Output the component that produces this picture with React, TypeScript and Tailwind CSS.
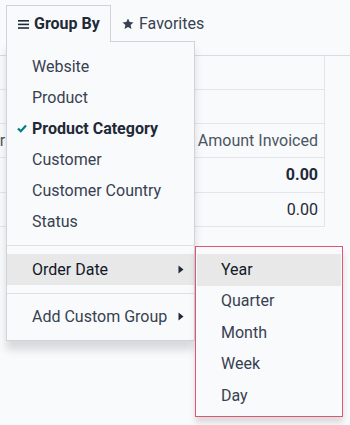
import React from "react";

const Caret = () => (
  <svg width="6" height="9" viewBox="0 0 6 9" className="shrink-0">
    <path d="M0.5 0.5 L5.5 4.5 L0.5 8.5 Z" fill="#1f2937" />
  </svg>
);

export default function App() {
  const items = ["Website", "Product", "Product Category", "Customer", "Customer Country", "Status"];
  const sub = ["Year", "Quarter", "Month", "Week", "Day"];
  return (
    <div
      className="relative w-[350px] h-[425px] overflow-hidden bg-[#f9fafb] text-[16px] text-[#374151]"
      style={{ fontFamily: "Roboto, 'Liberation Sans', sans-serif" }}
    >
      {/* top bar */}
      <div className="h-[56px] border-b border-[#d8dbdf] flex items-start pl-[6px] pt-[5px]">
        <div className="relative z-20 h-[37px] w-[105px] border border-b-0 border-[#d0d3d7] bg-[#f9fafb] flex items-center pl-[11px] gap-[5px] font-bold text-[#1f2937]">
          <svg width="11" height="10" viewBox="0 0 11 10">
            <rect x="0" y="1" width="11" height="1.6" fill="#1f2937" />
            <rect x="0" y="4.6" width="11" height="1.6" fill="#1f2937" />
            <rect x="0" y="8.2" width="11" height="1.6" fill="#1f2937" />
          </svg>
          <span>Group By</span>
        </div>
        <div className="h-[37px] flex items-center pl-[11px] gap-[5px] text-[#374151]">
          <svg width="12" height="12" viewBox="0 0 24 24">
            <path
              d="M12 1l3.3 7.1 7.7.8-5.8 5.2 1.7 7.7L12 17.9l-6.9 3.9 1.7-7.7L1 8.9l7.7-.8z"
              fill="#374151"
            />
          </svg>
          <span>Favorites</span>
        </div>
      </div>

      {/* background table */}
      <div className="grid grid-cols-[195px_130px] text-[#374151]">
        <div className="h-[34px] border-b border-[#e3e5e8]" />
        <div className="h-[34px] border-b border-r border-[#e3e5e8]" />
        <div className="h-[34px] border-b border-[#e3e5e8]" />
        <div className="h-[34px] border-b border-r border-[#e3e5e8]" />
        <div className="h-[34px] border-b border-[#e3e5e8] flex items-center">
          <span className="-ml-[34px] text-[#4b5563]">Order</span>
        </div>
        <div className="h-[34px] border-b border-r border-[#e3e5e8] flex items-center justify-end pr-[6px] text-[#4b5563]">
          Amount Invoiced
        </div>
        <div className="h-[35px] border-b border-[#e3e5e8]" />
        <div className="h-[35px] border-b border-r border-[#e3e5e8] flex items-center justify-end pr-[6px] font-bold text-[#1f2937]">
          0.00
        </div>
        <div className="h-[34px] border-b border-[#e3e5e8]" />
        <div className="h-[34px] border-b border-r border-[#e3e5e8] flex items-center justify-end pr-[6px] text-[#1f2937]">
          0.00
        </div>
      </div>

      {/* group by dropdown */}
      <div className="absolute z-10 left-[6px] top-[41px] w-[189px] h-[300px] border border-[#d0d3d7] bg-[#f9fafb] shadow-[0_9px_8px_rgba(0,0,0,0.13)] pt-[9px]">
        {items.map((it) => (
          <div key={it} className="h-[31px] flex items-center relative pl-[25px]">
            {it === "Product Category" ? (
              <>
                <svg width="10" height="9" viewBox="0 0 10 9" className="absolute left-[10px] top-[11px]">
                  <path d="M1 4.5 L3.8 7.2 L9 1.5" fill="none" stroke="#017e84" strokeWidth="2.2" />
                </svg>
                <span className="font-bold text-[#1f2937]">{it}</span>
              </>
            ) : (
              <span>{it}</span>
            )}
          </div>
        ))}
        <div className="mt-[8px] border-t border-[#dfe1e4]" />
        <div className="mt-[8px] h-[31px] bg-[#e8e8e9] flex items-center justify-between pl-[25px] pr-[10px] text-[#111827]">
          <span>Order Date</span>
          <Caret />
        </div>
        <div className="mt-[8px] border-t border-[#dfe1e4]" />
        <div className="mt-[7px] h-[31px] flex items-center justify-between pl-[25px] pr-[10px]">
          <span>Add Custom Group</span>
          <Caret />
        </div>
      </div>

      {/* submenu */}
      <div className="absolute z-30 left-[195px] top-[246px] w-[148px] h-[171px] border-[1.5px] border-[#e15473] bg-[#f9fafb] shadow-[0_6px_6px_rgba(0,0,0,0.12)] pt-[7px] px-[1px]">
        {sub.map((s, i) => (
          <div
            key={s}
            className={
              "h-[31.5px] flex items-center pl-[24px] " +
              (i === 0 ? "bg-[#e8e8e9] text-[#111827]" : "")
            }
          >
            {s}
          </div>
        ))}
      </div>
    </div>
  );
}
